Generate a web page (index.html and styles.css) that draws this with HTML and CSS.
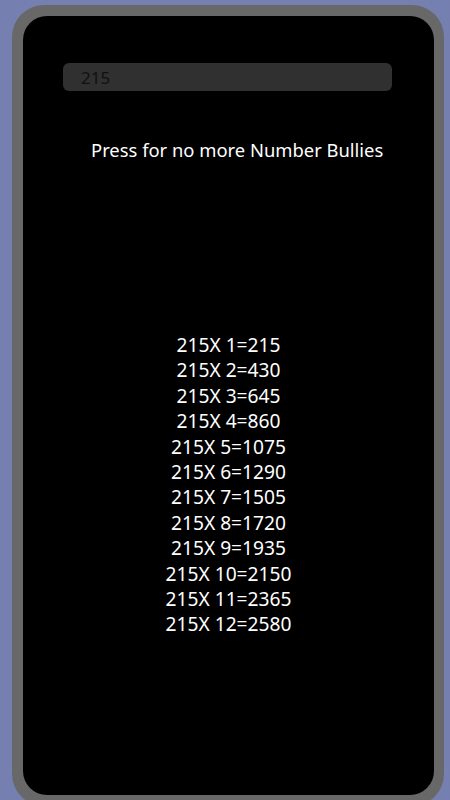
FILE: index.html
```html
<!DOCTYPE html>
<html lang="en">
<head>
    <meta charset="UTF-8">
    <meta name="viewport" content="width=device-width, initial-scale=1.0">
    <title>Number Bullies</title>
    <link rel="stylesheet" href="styles.css">
</head>
<body>

<div class="phone">
    <div class="screen">
        <input type="text" class="number-input" value="215">

        <p class="press-text">Press for no more Number Bullies</p>

        <div class="table">
            <p>215X 1=215</p>
            <p>215X 2=430</p>
            <p>215X 3=645</p>
            <p>215X 4=860</p>
            <p>215X 5=1075</p>
            <p>215X 6=1290</p>
            <p>215X 7=1505</p>
            <p>215X 8=1720</p>
            <p>215X 9=1935</p>
            <p>215X 10=2150</p>
            <p>215X 11=2365</p>
            <p>215X 12=2580</p>
        </div>
    </div>
</div>

</body>
</html>
```

FILE: styles.css
```css
* {
    margin: 0;
    padding: 0;
    box-sizing: border-box;
}

body {
    font-family: 'Noto Sans', 'Open Sans', sans-serif;
    background-color: #7580b0;
    height: 800px;
    overflow: hidden;
    padding: 5px 6px 0 12px;
}

.phone {
    width: 432px;
    height: 801px;
    background-color: #686868;
    border-radius: 32px;
    padding: 11px 10px 11px 11px;
}

.screen {
    background-color: #000;
    height: 779px;
    border-radius: 24px;
    display: flex;
    flex-direction: column;
    color: #fff;
}

.number-input {
    margin: 47px 0 0 40px;
    width: 329px;
    height: 28px;
    background-color: #303030;
    border: none;
    border-radius: 6px;
    padding: 0 18px;
    font-family: 'Noto Sans', sans-serif;
    font-size: 17px;
    color: #111;
    outline: none;
}

.press-text {
    margin: 47px 0 0 68px;
    font-size: 18.4px;
    line-height: 24px;
}

.table {
    margin-top: 170px;
    text-align: center;
    font-size: 19.2px;
    line-height: 25.4px;
}
```
